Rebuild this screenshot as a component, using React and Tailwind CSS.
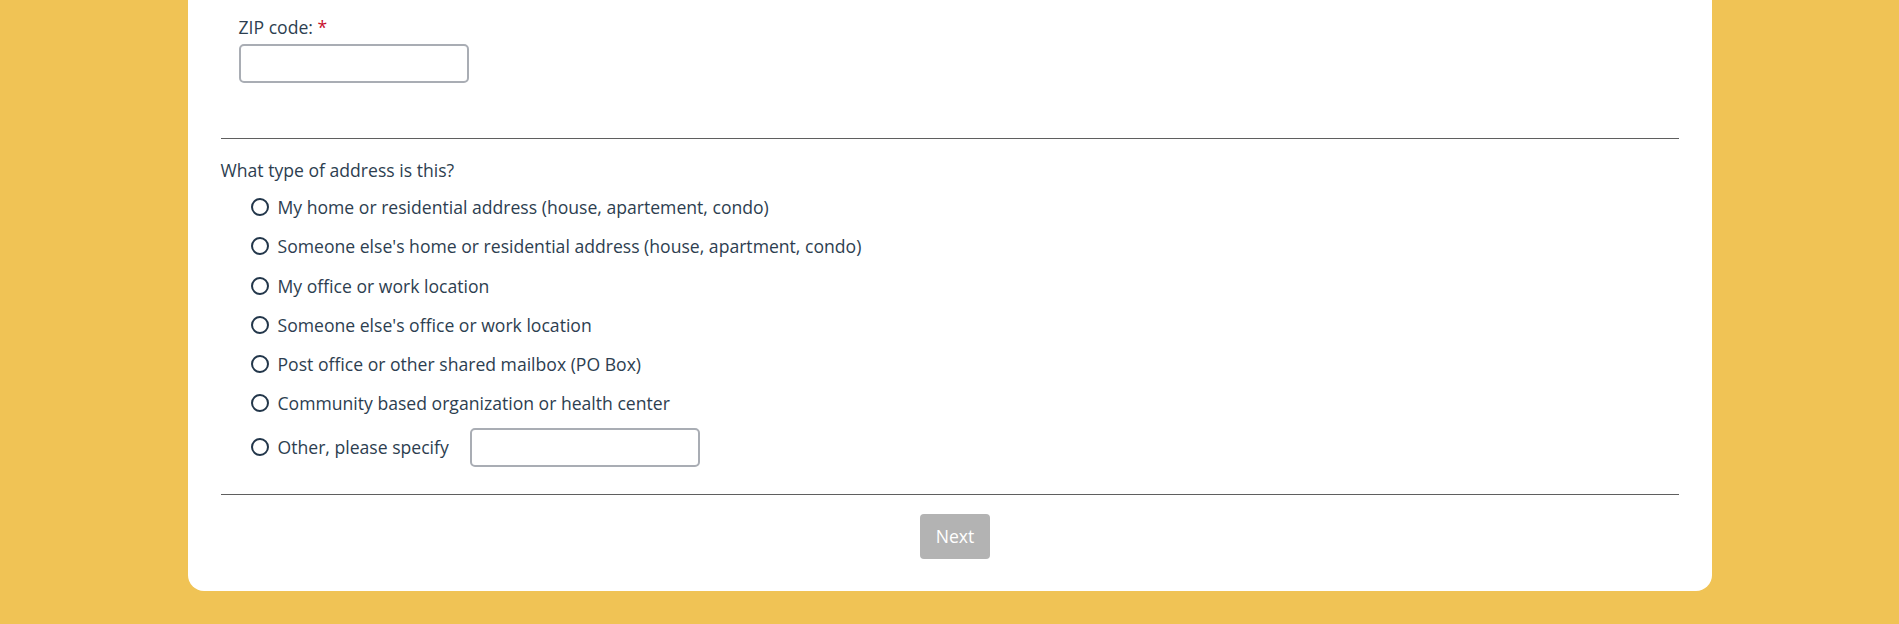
const options = [
  'My home or residential address (house, apartement, condo)',
  "Someone else's home or residential address (house, apartment, condo)",
  'My office or work location',
  "Someone else's office or work location",
  'Post office or other shared mailbox (PO Box)',
  'Community based organization or health center',
]

const Radio = () => (
  <span className="inline-block w-[18px] h-[18px] rounded-full border-2 border-[#22364a] bg-white shrink-0" />
)

export default function App() {
  return (
    <div className="min-h-screen bg-[#f0c355] flex justify-center font-['Open_Sans',sans-serif] text-[17.6px] leading-6 text-[#2d3e50]">
      <div className="w-[1524px] h-[591px] bg-white rounded-b-2xl px-[33px] pb-[34px] flex flex-col">
        <div className="pl-[18px] pt-[15px]">
          <label className="block">
            ZIP code: <span className="text-[#c8102e]">*</span>
          </label>
          <input
            type="text"
            className="mt-[5px] block w-[230px] h-[39px] rounded-[5px] border-2 border-[#a9adb4] bg-white"
          />
        </div>

        <hr className="mt-[55px] border-0 border-t border-[#5f5f5f]" />

        <p className="mt-[19px]">What type of address is this?</p>

        <div className="mt-[13px] pl-[30px] flex flex-col gap-[15.3px]">
          {options.map((o) => (
            <div key={o} className="flex items-center gap-[9px] h-6">
              <Radio />
              <span>{o}</span>
            </div>
          ))}
          <div className="flex items-center gap-[9px] -mt-[3px]">
            <Radio />
            <span>Other, please specify</span>
            <input
              type="text"
              className="ml-[12px] block w-[230px] h-[39px] rounded-[5px] border-2 border-[#a9adb4] bg-white"
            />
          </div>
        </div>

        <hr className="mt-[27px] border-0 border-t border-[#5f5f5f]" />

        <div className="mt-[19px] flex justify-center">
          <button className="ml-[11px] w-[70px] h-[45px] rounded-[4px] bg-[#b3b3b3] text-white">Next</button>
        </div>
      </div>
    </div>
  )
}
